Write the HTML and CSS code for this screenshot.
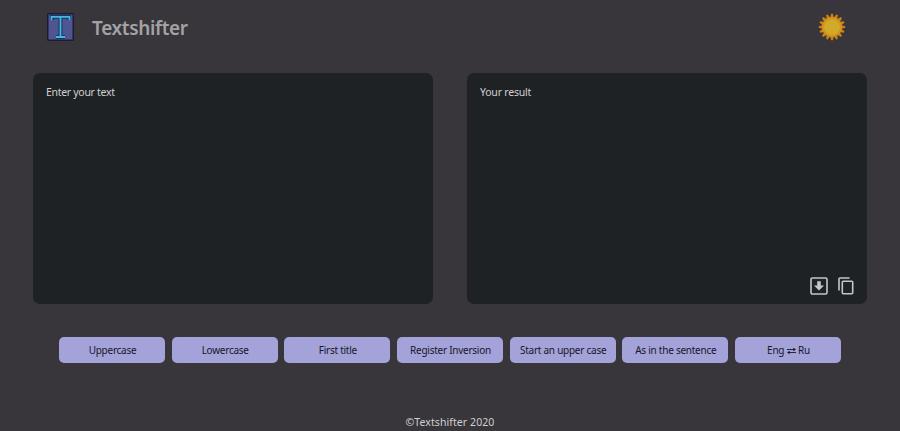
FILE: index.html
```
<!DOCTYPE html>
<html lang="en">
<head>
<meta charset="utf-8">
<title>Textshifter</title>
<link rel="stylesheet" href="styles.css">
</head>
<body>
<header class="header">
  <div class="brand">
    <svg class="logo" viewBox="0 0 27 28">
      <rect x=".75" y=".75" width="25.5" height="26.5" rx=".8" fill="#4e5590" stroke="#1b1d35" stroke-width="1.5"/>
      <path d="M5 7V3.7H22V7M13.5 4V24M9.2 24.1H17.8" fill="none" stroke="#17385e" stroke-width="4"/>
      <path d="M4.5 7.2V3.8H22.5V7.2M13.5 4V24M9 24H18" fill="none" stroke="#45b5e5" stroke-width="1.8"/>
    </svg>
    <h1 class="title">Textshifter</h1>
  </div>
  <svg class="sun" viewBox="-14 -14 28 28">
    <defs><path id="ray" d="M-2.2 -8L-.8 -13.2H.8L2.2 -8Z"/></defs>
    <g fill="#cb8119">
      <use href="#ray"/><use href="#ray" transform="rotate(22.5)"/><use href="#ray" transform="rotate(45)"/><use href="#ray" transform="rotate(67.5)"/>
      <use href="#ray" transform="rotate(90)"/><use href="#ray" transform="rotate(112.5)"/><use href="#ray" transform="rotate(135)"/><use href="#ray" transform="rotate(157.5)"/>
      <use href="#ray" transform="rotate(180)"/><use href="#ray" transform="rotate(202.5)"/><use href="#ray" transform="rotate(225)"/><use href="#ray" transform="rotate(247.5)"/>
      <use href="#ray" transform="rotate(270)"/><use href="#ray" transform="rotate(292.5)"/><use href="#ray" transform="rotate(315)"/><use href="#ray" transform="rotate(337.5)"/>
    </g>
    <circle r="10" fill="#d1961b"/>
    <circle r="7.8" fill="#d3aa27"/>
  </svg>
</header>
<main>
  <section class="panels">
    <div class="panel"><span class="hint-input">Enter your text</span></div>
    <div class="panel">
      <span class="hint-result">Your result</span>
      <div class="tools">
        <svg class="download" viewBox="0 0 18 18"><rect x="1" y="1" width="16" height="16" rx="1.4" fill="none" stroke="#c4c6c7" stroke-width="1.6"/><path d="M7.2 4.3H10.8V8.4H14L9 13.5L4 8.4H7.2Z" fill="#c4c6c7"/></svg>
        <svg class="copy" viewBox="0 0 16 18"><path d="M1 13.5V2Q1 1 2 1H11.5" fill="none" stroke="#c4c6c7" stroke-width="1.6"/><rect x="4.3" y="4.2" width="10.4" height="12.6" rx="1" fill="none" stroke="#c4c6c7" stroke-width="1.6"/></svg>
      </div>
    </div>
  </section>
  <nav class="actions">
    <button class="action">Uppercase</button>
    <button class="action">Lowercase</button>
    <button class="action">First title</button>
    <button class="action">Register Inversion</button>
    <button class="action">Start an upper case</button>
    <button class="action">As in the sentence</button>
    <button class="action">Eng <svg class="swap" viewBox="0 0 9 8"><path d="M0 2.5H7M2 5.5H9" stroke="#17172b" stroke-width=".9"/><path d="M6.3 .7L9 2.5L6.3 4.3ZM2.7 3.7L0 5.5L2.7 7.3Z" fill="#17172b"/></svg> Ru</button>
  </nav>
</main>
<footer class="footer">©Textshifter 2020</footer>
</body>
</html>
```
FILE: styles.css
```
* { box-sizing: border-box; }
body {
  margin: 0;
  height: 431px;
  overflow: hidden;
  background: #38363a;
  color: #d0d0d1;
  font-family: "Noto Sans", "Open Sans", sans-serif;
  font-size: 10.5px;
}
.header {
  height: 72.5px;
  padding: 12.5px 54.5px 0 47px;
  display: flex;
  justify-content: space-between;
  align-items: flex-start;
}
.brand { display: flex; align-items: flex-start; gap: 18px; }
.logo { width: 27px; height: 28px; }
.title {
  margin: 0;
  color: #a3a2a4;
  font-size: 19px;
  font-weight: 600;
  line-height: 30px;
  letter-spacing: -0.35px;
}
.sun { width: 28px; height: 28px; }
.panels {
  display: grid;
  grid-template-columns: 400px 400px;
  gap: 34px;
  padding-left: 33px;
}
.panel {
  height: 231px;
  padding: 11px 13px 9px;
  border-radius: 7px;
  background: #1f2224;
  line-height: 16px;
  display: flex;
  flex-direction: column;
  justify-content: space-between;
  align-items: flex-start;
}
.hint-input { letter-spacing: -0.3px; }
.hint-result { letter-spacing: -0.2px; }
.tools { display: flex; gap: 10px; align-self: flex-end; }
.download { width: 18px; height: 18px; }
.copy { width: 16px; height: 18px; }
.actions {
  margin: 33px 59px 0;
  display: grid;
  grid-template-columns: repeat(7, 1fr);
  gap: 6.6px;
}
.action {
  height: 26.5px;
  padding: 0 0 0 1px;
  border: 0;
  border-radius: 5px;
  background: #a3a2d9;
  color: #17172b;
  font: inherit;
  font-size: 10px;
  letter-spacing: -0.25px;
  line-height: 26px;
  white-space: nowrap;
}
.swap { width: 9px; height: 8px; vertical-align: -1px; }
.footer { margin-top: 52px; text-align: center; line-height: 15px; letter-spacing: 0.08px; }
```
